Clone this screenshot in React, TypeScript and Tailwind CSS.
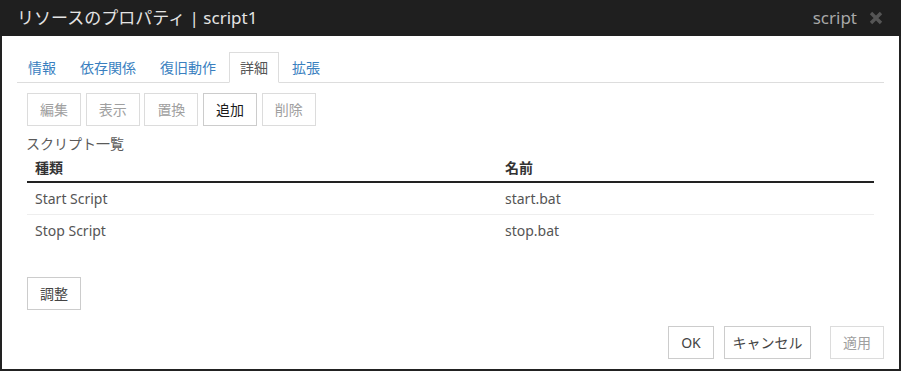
import React from "react";

const FONT = '"Noto Sans", "Noto Sans CJK JP", sans-serif';

function Btn({
  children,
  disabled,
  className = "",
}: {
  children: React.ReactNode;
  disabled?: boolean;
  className?: string;
}) {
  return (
    <div
      className={
        "h-[33px] flex items-center justify-center border text-[14px] leading-[20px] bg-white " +
        (disabled
          ? "border-[#dcdcdc] text-[#a0a0a0]"
          : "border-[#cccccc] text-[#444]") +
        " " +
        className
      }
    >
      {children}
    </div>
  );
}

export default function App() {
  const tabs = ["情報", "依存関係", "復旧動作", "詳細", "拡張"];
  return (
    <div
      className="w-[901px] h-[371px] bg-white flex flex-col overflow-hidden"
      style={{ fontFamily: FONT }}
    >
      {/* Title bar */}
      <div className="h-[36px] bg-[#1f1f1f] flex items-center pl-[17px] pr-[18px] shrink-0">
        <div className="text-[17px] leading-[22px] text-[#e4e4e4] flex-1">
          リソースのプロパティ | script1
        </div>
        <div className="text-[17px] leading-[22px] text-[#a8a8a8] mr-[12px]">
          script
        </div>
        <svg width="14" height="14" viewBox="0 0 14 14">
          <path
            d="M2 2 L12 12 M12 2 L2 12"
            stroke="#555555"
            strokeWidth="3.4"
            strokeLinecap="butt"
          />
        </svg>
      </div>

      {/* Body */}
      <div className="flex-1 border-l-2 border-r-2 border-b-2 border-[#222] px-[15px] flex flex-col">
        {/* Tabs */}
        <div className="mt-[16px] flex border-b border-[#dddddd] h-[31px]">
          {tabs.map((t) => {
            const active = t === "詳細";
            return (
              <div
                key={t}
                className={
                  "h-[31px] px-[10px] mr-[2px] flex items-center text-[14px] leading-[20px] border " +
                  (active
                    ? "border-[#dddddd] border-b-white bg-white text-[#555]"
                    : "border-transparent text-[#3a7fbf]")
                }
              >
                {t}
              </div>
            );
          })}
        </div>

        {/* Action buttons */}
        <div className="mt-[10px] pl-[10px] flex gap-[4.7px]">
          <Btn disabled className="w-[54px]">編集</Btn>
          <Btn disabled className="w-[54px]">表示</Btn>
          <Btn disabled className="w-[54px]">置換</Btn>
          <Btn className="w-[54px] !text-[#1a1a1a]">追加</Btn>
          <Btn disabled className="w-[54px]">削除</Btn>
        </div>

        <div className="mt-[8px] pl-[9px] text-[14px] leading-[20px] text-[#5a5a5a]">
          スクリプト一覧
        </div>

        {/* Table */}
        <div className="mx-[10px] text-[14px] leading-[20px] text-[#555]">
          <div className="h-[29px] flex items-center border-b-2 border-[#222] font-bold text-[#333]">
            <div className="w-[470px] pl-[8px]">種類</div>
            <div className="pl-[8px]">名前</div>
          </div>
          <div className="h-[32px] flex items-center border-b border-[#eeeeee]">
            <div className="w-[470px] pl-[8px]">Start Script</div>
            <div className="pl-[8px]">start.bat</div>
          </div>
          <div className="h-[31px] flex items-center">
            <div className="w-[470px] pl-[8px]">Stop Script</div>
            <div className="pl-[8px]">stop.bat</div>
          </div>
        </div>

        <div className="mt-[31px] pl-[10px] flex">
          <Btn className="w-[54px]">調整</Btn>
        </div>

        {/* Footer */}
        <div className="mt-[16px] flex justify-end">
          <Btn className="w-[46px]">OK</Btn>
          <Btn className="w-[87px] ml-[10px]">キャンセル</Btn>
          <Btn disabled className="w-[54px] ml-[19px]">適用</Btn>
        </div>
      </div>
    </div>
  );
}
